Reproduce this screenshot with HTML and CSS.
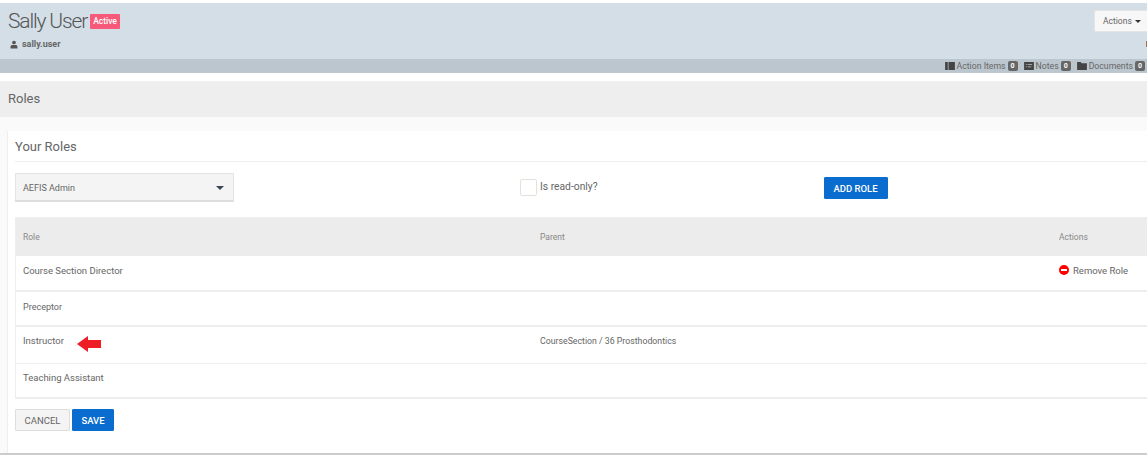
FILE: index.html
```html
<!DOCTYPE html>
<html lang="en">
<head>
<meta charset="utf-8">
<title>Roles</title>
<link rel="stylesheet" href="styles.css">
</head>
<body>
<header class="profile">
  <div class="profile-main">
    <div class="identity">
      <h1 class="name">Sally User <span class="status">Active</span></h1>
      <div class="username">
        <svg class="user-icon" viewBox="0 0 12 12"><circle cx="6" cy="3" r="2.8"/><path d="M0.8 12V9.2C0.8 7.4 2.2 6.6 3.4 6.6H8.6C9.8 6.6 11.2 7.4 11.2 9.2V12Z"/></svg>
        <span>sally.user</span>
      </div>
    </div>
    <div class="side">
      <button class="actions-btn">Actions <span class="caret"></span></button>
      <span class="sliver"></span>
    </div>
  </div>
  <div class="profile-bar">
    <span class="bar-item">
      <svg class="bar-icon" viewBox="0 0 11 9"><rect width="3" height="9"/><rect x="3.8" width="7.2" height="9"/></svg>Action Items<span class="count">0</span>
    </span>
    <span class="bar-item">
      <svg class="bar-icon" viewBox="0 0 11 9"><path fill-rule="evenodd" d="M0 0H11V9H0ZM2 2.2V3.2H3V2.2ZM4 2.2V3.2H9V2.2ZM2 5V6H3V5ZM4 5V6H8V5Z"/></svg>Notes<span class="count">0</span>
    </span>
    <span class="bar-item">
      <svg class="bar-icon" viewBox="0 0 11 9"><path d="M0 0H4L5 1.4H11V9H0Z"/></svg>Documents<span class="count">0</span>
    </span>
  </div>
</header>

<div class="page-title">Roles</div>

<main class="content">
  <section class="card">
    <h2 class="card-title">Your Roles</h2>
    <div class="role-form">
      <div class="select"><span>AEFIS Admin</span><span class="select-arrow"></span></div>
      <label class="check"><span class="checkbox"></span><span>Is read-only?</span></label>
      <button class="btn btn-primary add-role">ADD ROLE</button>
    </div>
    <div class="table">
      <div class="row head"><span>Role</span><span>Parent</span><span>Actions</span></div>
      <div class="row r1"><span>Course Section Director</span><span></span>
        <span class="remove"><svg class="remove-icon" viewBox="0 0 10 10"><circle cx="5" cy="5" r="5"/><rect class="minus" x="2" y="4" width="6" height="2"/></svg>Remove Role</span></div>
      <div class="row r2"><span class="cell-narrow">Preceptor</span><span></span><span></span></div>
      <div class="row r3"><span class="with-arrow">Instructor<svg class="arrow" viewBox="0 0 24 16"><path d="M0 8L11 0V4H24V12H11V16Z"/></svg></span><span class="cell-parent">CourseSection / 36 Prosthodontics</span><span></span></div>
      <div class="row r4"><span>Teaching Assistant</span><span></span><span></span></div>
    </div>
    <div class="form-actions">
      <button class="btn btn-default">CANCEL</button>
      <button class="btn btn-primary save">SAVE</button>
    </div>
  </section>
</main>
</body>
</html>
```
FILE: styles.css
```css
* { box-sizing: border-box; }
html, body { margin: 0; padding: 0; }
body {
  width: 1147px;
  height: 455px;
  overflow: hidden;
  background: #fff;
  font-family: Roboto, "Liberation Sans", sans-serif;
  color: #666;
  padding-top: 3px;
}
button { font-family: inherit; cursor: pointer; }

.profile { background: #d3dee7; }
.profile-main {
  height: 56px;
  display: flex;
  justify-content: space-between;
  align-items: flex-start;
  padding: 6px 0 0 8px;
}
.name {
  display: flex;
  align-items: center;
  gap: 3px;
  margin: 0;
  font-size: 21px;
  line-height: 24px;
  font-weight: 300;
  color: #555;
  letter-spacing: -1.15px;
}
.status {
  background: #f65a78;
  color: #fff;
  font-size: 8.5px;
  line-height: 15px;
  font-weight: 500;
  padding: 0 3px;
  border-radius: 1px;
  letter-spacing: 0;
}
.username {
  display: flex;
  align-items: center;
  gap: 4px;
  margin-top: 5px;
  padding-left: 2px;
  font-size: 9px;
  font-weight: 700;
  line-height: 12px;
  color: #666;
}
.user-icon { width: 8px; height: 9px; fill: #555; }
.side {
  display: flex;
  flex-direction: column;
  align-items: flex-end;
}
.actions-btn {
  margin-top: 1px;
  width: 53px;
  height: 22px;
  padding: 0 0 0 8px;
  border: 1px solid #e4e4e4;
  border-right: 0;
  border-radius: 2px 0 0 2px;
  background: #f7f7f7;
  color: #666;
  font-size: 8.5px;
  text-align: left;
  white-space: nowrap;
}
.caret {
  display: inline-block;
  vertical-align: 1px;
  margin-left: 1px;
  border: 3px solid transparent;
  border-top-color: #333;
  border-bottom: 0;
}
.sliver {
  width: 1px;
  height: 6px;
  margin-top: 9px;
  background: #a5744f;
}
.profile-bar {
  height: 14px;
  background: #bcc6cf;
  display: flex;
  justify-content: flex-end;
  align-items: center;
  gap: 6px;
  font-size: 8.7px;
  color: #666;
  padding-right: 2px;
}
.bar-item { display: flex; align-items: center; white-space: nowrap; }
.bar-icon { width: 10px; height: 8px; fill: #444; margin-right: 2px; }
.count {
  margin-left: 2px;
  width: 10px;
  height: 10px;
  line-height: 10px;
  text-align: center;
  background: #666;
  color: #fff;
  font-size: 7px;
  font-weight: 700;
  border-radius: 2px;
}

.page-title {
  margin-top: 8px;
  height: 36px;
  line-height: 36px;
  background: #eee;
  padding-left: 8px;
  font-size: 13px;
  color: #666;
}

.content {
  background: #fafafa;
  padding: 14px 0 0 7px;
  height: 338px;
  border-bottom: 2px solid #ccc;
}
.card {
  background: #fff;
  height: 322px;
  border-left: 1px solid #eee;
  padding: 0 0 0 7px;
}
.card-title {
  margin: 0;
  height: 31px;
  line-height: 31px;
  font-size: 13px;
  font-weight: 400;
  color: #666;
  border-bottom: 1px solid #eee;
}
.role-form {
  height: 55px;
  display: flex;
  align-items: flex-start;
  padding-top: 11px;
}
.select {
  width: 219px;
  height: 29px;
  background: #f4f4f4;
  border: 1px solid #e4e4e4;
  border-bottom: 2px solid #ddd;
  display: flex;
  align-items: center;
  justify-content: space-between;
  padding: 2px 9px 0 7px;
  font-size: 9px;
  color: #666;
}
.select-arrow {
  border: 4px solid transparent;
  border-top: 4px solid #3c4557;
  border-bottom: 0;
}
.check {
  display: flex;
  align-items: flex-start;
  gap: 3px;
  margin: 6px 0 0 286px;
  font-size: 10.3px;
  line-height: 16px;
  color: #666;
}
.checkbox {
  width: 17px;
  height: 17px;
  border: 1px solid #e4e2da;
  border-radius: 2px;
  background: #fff;
}
.btn {
  height: 22px;
  border-radius: 1px;
  font-size: 9.5px;
  font-weight: 500;
  padding: 0;
}
.btn-primary { background: #0a6ccf; border: 1px solid #0a6ccf; color: #fff; }
.btn-default { background: #f4f4f4; border: 1px solid #ddd; color: #666; font-weight: 400; }
.add-role { width: 64px; margin: 4px 0 0 226px; }
.table {
  border-left: 1px solid #eee;
  border-bottom: 2px solid #eee;
  font-size: 9.5px;
}
.row {
  display: grid;
  grid-template-columns: 517px 519px 1fr;
  align-items: center;
  padding-left: 7px;
  border-top: 1px solid #eee;
  color: #666;
}
.head { height: 39px; background: #ececec; color: #888; font-size: 8.5px; }
.r1 { height: 34px; padding-bottom: 6px; border-top: 0; }
.r2 { height: 35px; border-top-width: 2px; padding-bottom: 3px; }
.r3 { height: 38px; border-top-width: 2px; padding-bottom: 9px; }
.r4 { height: 34px; padding-bottom: 7px; }
.cell-narrow { font-size: 9px; }
.cell-parent { font-size: 8.75px; }
.remove { display: flex; align-items: center; gap: 4px; }
.remove-icon { width: 10px; height: 10px; fill: #f00; }
.minus { fill: #fff; }
.with-arrow { display: flex; align-items: center; }
.arrow { position: relative; top: 3px; width: 24px; height: 16px; margin-left: 13px; fill: #ee1c25; }
.form-actions { display: flex; gap: 2px; margin-top: 10px; }
.btn-default { width: 55px; }
.save { width: 42px; }
```
